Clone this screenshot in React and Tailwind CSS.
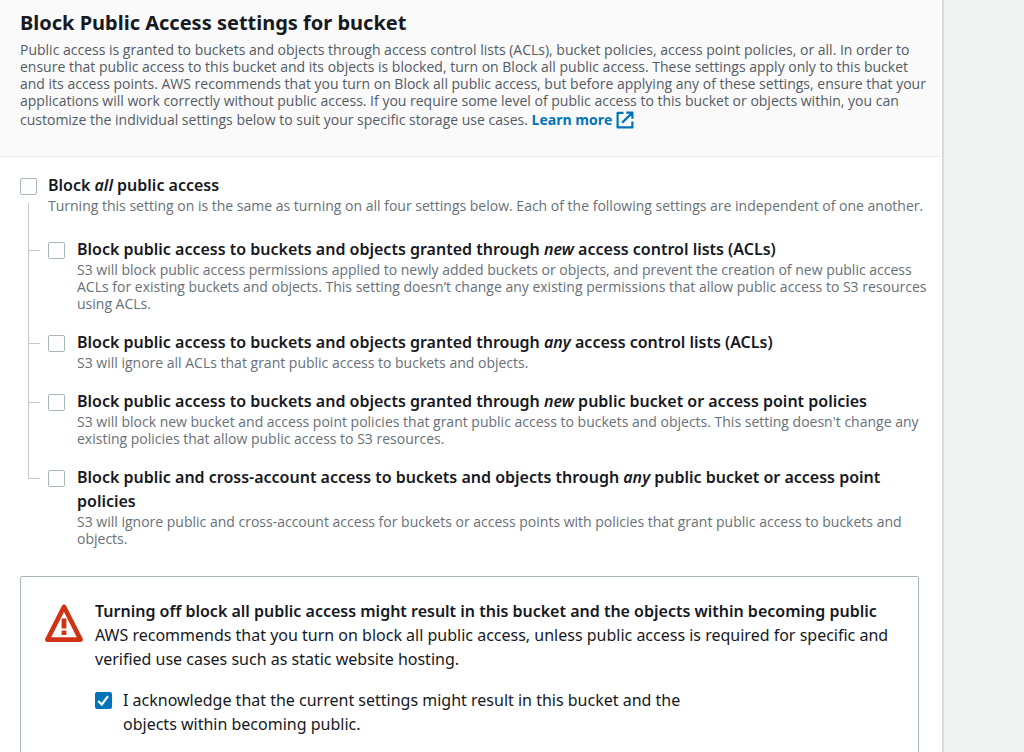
import React, { useState } from "react";

const settings = [
  {
    id: "new-acls",
    label: (
      <>
        Block public access to buckets and objects granted through <em>new</em> access control lists (ACLs)
      </>
    ),
    lines: [
      "S3 will block public access permissions applied to newly added buckets or objects, and prevent the creation of new public access",
      "ACLs for existing buckets and objects. This setting doesn’t change any existing permissions that allow public access to S3 resources",
      "using ACLs.",
    ],
  },
  {
    id: "any-acls",
    label: (
      <>
        Block public access to buckets and objects granted through <em>any</em> access control lists (ACLs)
      </>
    ),
    lines: ["S3 will ignore all ACLs that grant public access to buckets and objects."],
  },
  {
    id: "new-policies",
    label: (
      <>
        Block public access to buckets and objects granted through <em>new</em> public bucket or access point policies
      </>
    ),
    lines: [
      "S3 will block new bucket and access point policies that grant public access to buckets and objects. This setting doesn't change any",
      "existing policies that allow public access to S3 resources.",
    ],
  },
  {
    id: "any-policies",
    label: (
      <>
        Block public and cross-account access to buckets and objects through <em>any</em> public bucket or access point
        <br />
        policies
      </>
    ),
    lines: [
      "S3 will ignore public and cross-account access for buckets or access points with policies that grant public access to buckets and",
      "objects.",
    ],
  },
];

function Lines({ lines }) {
  return lines.map((line) => (
    <span key={line} className="block whitespace-nowrap">
      {line}
    </span>
  ));
}

function Checkbox({ id, checked, onChange }) {
  return (
    <span className="grid size-[17px] shrink-0">
      <input
        id={id}
        type="checkbox"
        checked={checked}
        onChange={onChange}
        className="col-start-1 row-start-1 size-[17px] appearance-none rounded-xs border border-[#aab7b8] bg-white checked:border-[#0073bb] checked:bg-[#0073bb]"
      />
      {checked && (
        <svg viewBox="0 0 17 17" className="pointer-events-none col-start-1 row-start-1 size-[17px]" fill="none">
          <path d="M3.2 9 6.8 12.5 13 4.2" stroke="#fff" strokeWidth="2.2" />
        </svg>
      )}
    </span>
  );
}

function ExternalIcon() {
  return (
    <svg viewBox="0 0 18 18" className="mt-0.5 inline-block size-[18px] align-[-4px]" fill="none" stroke="currentColor" strokeWidth="2.2">
      <path d="M7.5 1.9H1.6v14.5h14.8v-6M10.3 1.7h6.1v6.1M16.2 1.9 6.2 11.6" strokeLinejoin="round" />
    </svg>
  );
}

function WarningIcon() {
  return (
    <svg viewBox="0 0 38 38" className="size-[38px] shrink-0" fill="none">
      <path d="M19 2.8 2.4 35.6h33.2z" stroke="#d13212" strokeWidth="4.6" strokeLinejoin="round" />
      <path d="M19 14.5v10M19 26.6v4.4" stroke="#d13212" strokeWidth="4.8" />
    </svg>
  );
}

function App() {
  const [checked, setChecked] = useState({ acknowledge: true });
  const toggle = (id) => setChecked({ ...checked, [id]: !checked[id] });

  return (
    <div className="flex min-h-screen bg-[#f1f3f3] font-['Noto_Sans','Open_Sans',sans-serif] text-[#16191f]">
      <main className="min-w-0 flex-1 border-r-2 border-[#d5dbdb] bg-white">
        <header className="border-b border-[#eaeded] bg-[#fafafa] px-5 pt-2 pb-[27px]">
          <h1 className="pb-[3px] text-xl leading-[30px] font-bold">Block Public Access settings for bucket</h1>
          <p className="font-['Open_Sans',sans-serif] text-sm leading-[17px] text-[#545b64]">
            <Lines
              lines={[
                "Public access is granted to buckets and objects through access control lists (ACLs), bucket policies, access point policies, or all. In order to",
                "ensure that public access to this bucket and its objects is blocked, turn on Block all public access. These settings apply only to this bucket",
                "and its access points. AWS recommends that you turn on Block all public access, but before applying any of these settings, ensure that your",
                "applications will work correctly without public access. If you require some level of public access to this bucket or objects within, you can",
              ]}
            />
            customize the individual settings below to suit your specific storage use cases.{" "}
            <a href="#learn-more" className="font-bold text-[#0073bb]">
              Learn more <ExternalIcon />
            </a>
          </p>
        </header>

        <section className="px-5 pt-4">
          <div className="flex gap-[11px]">
            <div className="flex w-[17px] flex-col pt-[5px]">
              <Checkbox id="block-all" checked={!!checked["block-all"]} onChange={() => toggle("block-all")} />
              <span className="mt-2 ml-2 flex-1 border-l border-[#c3cccc]" />
            </div>
            <div className="pb-[23px]">
              <label htmlFor="block-all" className="block text-base leading-6 font-semibold">
                Block <em>all</em> public access
              </label>
              <p className="font-['Open_Sans',sans-serif] text-sm leading-[17px] whitespace-nowrap text-[#687078]">
                Turning this setting on is the same as turning on all four settings below. Each of the following settings are independent of one another.
              </p>
            </div>
          </div>

          <ul>
            {settings.map((item, i) => (
              <li key={item.id} className="flex">
                <div className="ml-2 flex w-3 shrink-0 flex-col">
                  <span className="h-[14px] border-b border-l border-[#c3cccc]" />
                  {i < settings.length - 1 && <span className="flex-1 border-l border-[#c3cccc]" />}
                </div>
                <div className="mr-3 ml-2 pt-[5px]">
                  <Checkbox id={item.id} checked={!!checked[item.id]} onChange={() => toggle(item.id)} />
                </div>
                <div className={i < settings.length - 1 ? "pb-[18px]" : ""}>
                  <label htmlFor={item.id} className="block text-base leading-6 font-semibold whitespace-nowrap">
                    {item.label}
                  </label>
                  <p className="font-['Open_Sans',sans-serif] text-sm leading-[17px] text-[#687078]">
                    <Lines lines={item.lines} />
                  </p>
                </div>
              </li>
            ))}
          </ul>

          <div className="mt-[29px] mr-[3px] flex gap-3 rounded-xs border border-[#aab7b8] px-6 pt-[22px] pb-8">
            <div className="pt-[5px]">
              <WarningIcon />
            </div>
            <div className="text-base leading-6 whitespace-nowrap">
              <strong className="block font-semibold">
                Turning off block all public access might result in this bucket and the objects within becoming public
              </strong>
              <p>
                <Lines
                  lines={[
                    "AWS recommends that you turn on block all public access, unless public access is required for specific and",
                    "verified use cases such as static website hosting.",
                  ]}
                />
              </p>
              <div className="mt-[17px] flex gap-[11px]">
                <div className="pt-1">
                  <Checkbox id="acknowledge" checked={!!checked.acknowledge} onChange={() => toggle("acknowledge")} />
                </div>
                <label htmlFor="acknowledge">
                  I acknowledge that the current settings might result in this bucket and the
                  <br />
                  objects within becoming public.
                </label>
              </div>
            </div>
          </div>
        </section>
      </main>
      <aside className="w-20 shrink-0" />
    </div>
  );
}

export default App;
